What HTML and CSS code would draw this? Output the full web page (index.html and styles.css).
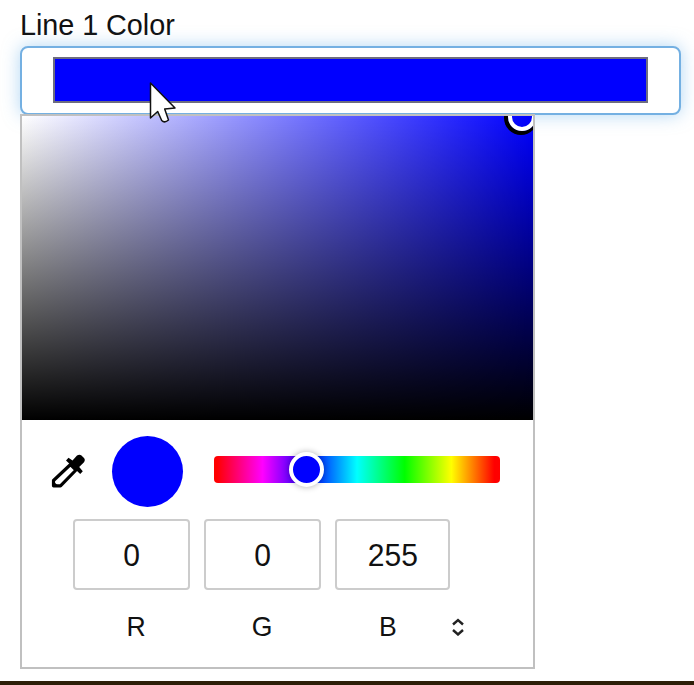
FILE: index.html
```html
<!DOCTYPE html>
<html lang="en">
<head>
<meta charset="utf-8">
<title>Line color</title>
<link rel="stylesheet" href="styles.css">
</head>
<body>
<main class="page">
  <div class="label">Line 1 Color</div>
  <div class="field"><div class="swatch"></div></div>
  <section class="picker">
    <div class="shade"><span class="shade-handle"></span></div>
    <div class="tools">
      <svg class="dropper" viewBox="0 0 36 36" width="36" height="36">
        <path d="M20.5 10.5 26 16 10.5 31.8H3.5V26.5Z" fill="none" stroke="#000" stroke-width="3.2" stroke-linejoin="round"/>
        <path d="M3 27 9 32.5H3Z"/>
        <path d="M18.5 3.8 22.5 6.5 27 1.6Q29.5-.3 31.5 1.6L34 4.1Q35.6 6 34 8.2L29.2 13 32.8 17.2 30.2 20 16 6.4Z"/>
      </svg>
      <div class="current"></div>
      <div class="hue"><span class="hue-handle"></span></div>
    </div>
    <div class="values">
      <div class="value"><span>0</span></div><div class="value"><span>0</span></div><div class="value last"><span>255</span></div>
    </div>
    <div class="names">
      <span>R</span><span>G</span><span>B</span>
      <svg class="switch" viewBox="0 0 12 18" width="12" height="18" fill="none" stroke="#222" stroke-width="2.4"><path d="M1 6.5 6 2 11 6.5M1 12 6 16.5 11 12"/></svg>
    </div>
  </section>
  <svg class="pointer" viewBox="0 0 28 43" width="28" height="43"><path d="M1.5 2V37L8.7 30.5 12.7 39.5Q15.5 42.5 19.5 39L15.7 28 26 27Z" fill="#fff" stroke="#111" stroke-width="1.5" stroke-linejoin="round"/></svg>
  <div class="bottom"></div>
</main>
</body>
</html>
```
FILE: styles.css
```css
* { box-sizing: border-box; }
body { margin: 0; background: #fff; color: #111; font-family: "Liberation Sans", Arial, sans-serif; }
.page { position: relative; width: 694px; height: 685px; overflow: hidden; display: flex; flex-direction: column; }
.label { height: 46px; padding: 9px 0 0 20px; font-size: 28.8px; line-height: 32px; letter-spacing: -.05px; flex: none; }
.field { width: 661px; height: 69px; flex: none; margin-left: 20px; padding: 9px 31px 10px; border: 2px solid #74b0e2; border-radius: 8px; background: #fff; box-shadow: 0 0 17px rgba(102, 175, 233, .5); }
.swatch { width: 595px; height: 46px; border: 2px solid #6d6d80; background: #00f; }
.picker { position: relative; width: 515px; height: 555px; flex: none; margin: -1px 0 0 20px; border: 2px solid #c0c0c0; background: #fff; }
.shade { position: relative; height: 304px; overflow: hidden; background: linear-gradient(to top, #000, transparent), linear-gradient(to right, #fff, #00f); }
.shade-handle { position: absolute; left: 486px; top: -13px; width: 28px; height: 28px; border: 4px solid #fff; border-radius: 50%; box-shadow: -1px 1px 0 3px #000; }
.tools { display: flex; height: 99px; padding-top: 16px; }
.dropper { margin: 18px 0 0 28px; }
.current { width: 71px; height: 71px; margin-left: 26px; border-radius: 50%; background: #00f; }
.hue { position: relative; width: 286px; height: 27px; margin: 20px 0 0 31px; border-radius: 4px; background: linear-gradient(to right, #f00 1%, #f0f 17%, #00f 33.33%, #0ff 50%, #0f0 66.67%, #ff0 83%, #f00 98%); }
.hue-handle { position: absolute; left: 75px; top: -4px; width: 35px; height: 35px; border: 4px solid #fff; border-radius: 50%; background: #00f; box-shadow: 0 0 6px rgba(0, 0, 0, .3); }
.values { display: flex; gap: 14px; padding-left: 51px; }
.value { width: 117px; height: 71px; border: 2px solid #ccc; border-radius: 4px; font-size: 31px; line-height: 69px; text-align: center; }
.value span { display: inline-block; transform: scaleX(.97); }
.value.last { width: 115px; }
.names { display: flex; padding: 21px 0 0 51px; font-size: 28px; line-height: 32px; }
.names span { width: 126px; text-align: center; transform: scaleX(.95); }
.switch { margin: 7px 0 0 1px; }
.pointer { position: absolute; left: 149px; top: 81px; }
.bottom { height: 4px; margin-top: auto; flex: none; background: #2d1e08; }
```
